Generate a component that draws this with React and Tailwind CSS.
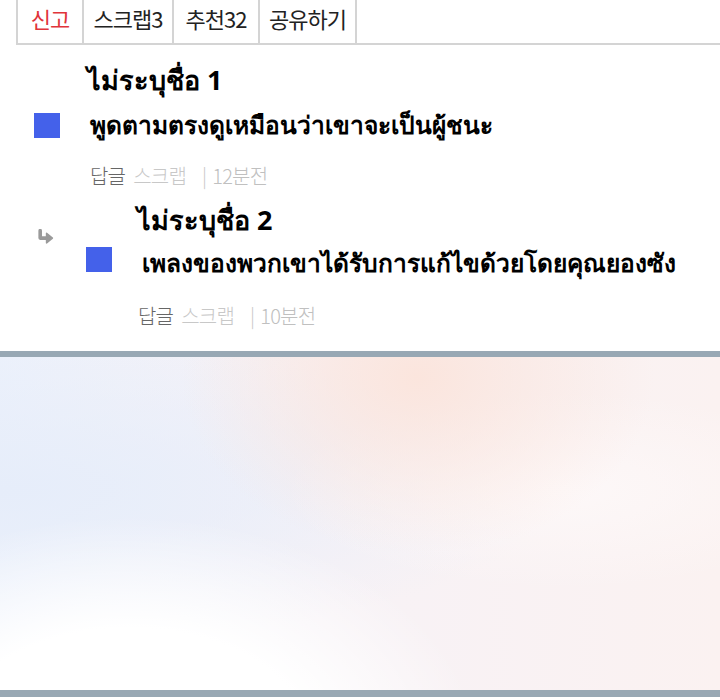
import React from 'react';

const ko = { fontFamily: '"Noto Sans CJK KR", "Noto Sans", sans-serif' };
const th = { fontFamily: 'Tahoma, "Noto Sans", "DejaVu Sans", sans-serif' };

function Meta({ time }) {
  return (
    <div className="flex items-center h-[28px] text-[20px] tracking-[-0.8px] font-light" style={ko}>
      <span className="text-[#666]">답글</span>
      <span className="ml-2 text-[#c8c8c8]">스크랩</span>
      <span className="ml-4 text-[#c8c8c8]">|</span>
      <span className="ml-1.5 text-[#c0c0c0]">{time}</span>
    </div>
  );
}

function ReplyArrow() {
  return (
    <svg width="17" height="15" viewBox="0 0 16 14" className="text-[#9a9a9a]">
      <path d="M3 1.5 L3 8.5 L9 8.5" fill="none" stroke="currentColor" strokeWidth="3.4" strokeLinecap="round" strokeLinejoin="round" />
      <path d="M9 4 L14.5 8.5 L9 13 Z" fill="currentColor" stroke="currentColor" strokeWidth="1.4" strokeLinejoin="round" />
    </svg>
  );
}

export default function App() {
  const tabs = [
    { label: '신고', w: 'w-[66px]', red: true },
    { label: '스크랩3', w: 'w-[90px]' },
    { label: '추천32', w: 'w-[86px]' },
    { label: '공유하기', w: 'w-[97px]' },
  ];

  return (
    <div className="w-[720px] h-[700px] bg-white overflow-hidden">
      {/* tab bar */}
      <div className="flex h-[45px] ml-4 border-b-2 border-[#d4d4d4]">
        {tabs.map((t, i) => (
          <div
            key={i}
            className={`flex items-center justify-center border-l-2 border-[#d4d4d4] text-[22px] tracking-[-1px] pb-[6px] ${t.w} ${t.red ? 'text-[#e0343a]' : 'text-[#222]'}`}
            style={ko}
          >
            {t.label}
          </div>
        ))}
        <div className="border-l-2 border-[#d4d4d4] w-0" />
      </div>

      {/* comment 1 */}
      <div className="pl-[87px] mt-[19px]">
        <div className="text-[27px] font-bold text-black leading-[32px]" style={th}>ไม่ระบุชื่อ 1</div>
      </div>
      <div className="flex items-center mt-[14px] h-[30px]">
        <div className="w-[26px] h-[25px] bg-[#4461ea] ml-[34px]" />
        <div className="ml-[30px] text-[24.5px] font-bold text-black leading-[30px]" style={th}>พูดตามตรงดูเหมือนว่าเขาจะเป็นผู้ชนะ</div>
      </div>
      <div className="pl-[90px] mt-[22px]">
        <Meta time="12분전" />
      </div>

      {/* comment 2 (reply) */}
      <div className="flex mt-[14px] h-[32px]">
        <div className="w-[137px] pl-[37px] pt-[25px]">
          <ReplyArrow />
        </div>
        <div className="text-[27px] font-bold text-black leading-[32px]" style={th}>ไม่ระบุชื่อ 2</div>
      </div>
      <div className="flex items-center mt-[8px] h-[30px]">
        <div className="w-[26px] h-[25px] bg-[#4461ea] ml-[86px]" />
        <div className="ml-[30px] text-[24.5px] font-bold text-black leading-[30px] pt-[8px]" style={th}>เพลงของพวกเขาได้รับการแก้ไขด้วยโดยคุณยองซัง</div>
      </div>
      <div className="pl-[138px] mt-[28px]">
        <Meta time="10분전" />
      </div>

      {/* banner image area */}
      <div className="mt-[21px] h-[6px] bg-[#98a8b4]" />
      <div className="h-[333px] bg-[radial-gradient(ellipse_at_18%_118%,#ffffff_0%,#ffffff_22%,transparent_42%),radial-gradient(ellipse_at_58%_6%,#fbe5dd_0%,transparent_40%),radial-gradient(ellipse_at_78%_40%,#fdf8f8_0%,transparent_35%),radial-gradient(ellipse_at_0%_40%,#e6edfa_0%,transparent_55%),linear-gradient(90deg,#ecf1fb,#f7f2f6_45%,#fbf2f1)]" />
      <div className="h-[7px] bg-[#98a8b4]" />
    </div>
  );
}
